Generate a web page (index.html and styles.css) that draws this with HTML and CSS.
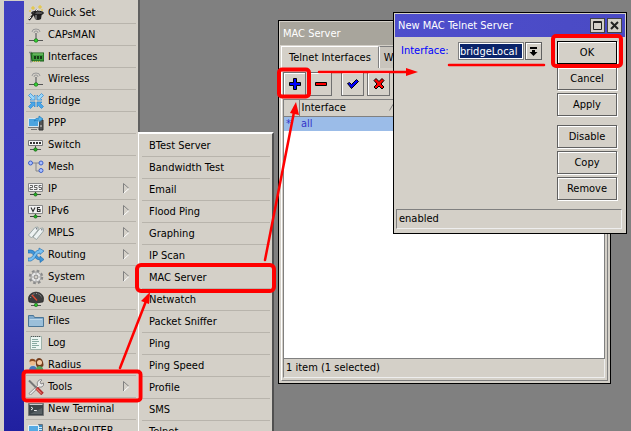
FILE: index.html
```html
<!DOCTYPE html>
<html lang="en">
<head>
<meta charset="utf-8">
<title>MAC Server</title>
<link rel="stylesheet" href="styles.css">
</head>
<body>
<div class="desktop">
  <div class="rail"></div>
  <nav class="menu main-menu">
    <a class="item" href="#"><svg class="icon" viewBox="0 0 16 16"><path d="M5 8h9l-1 6q-3 2-6 0z" fill="#222"/><ellipse cx="9.500" cy="8" rx="6" ry="1.800" fill="#555" stroke="#111"/><path d="M8 10v4" stroke="#aaa"/><path d="M1 15L9 5" stroke="#222" stroke-width="2"/><path d="M1 14l2-2M8 6l2-2" stroke="#eee"/><path d="M5 1v4M3 3h4M12 0v4M10 2h4M2 5v2M14 4v2" stroke="#e8c62c"/></svg>Quick Set</a>
    <a class="item" href="#"><svg class="icon" viewBox="0 0 16 16"><path d="M4 5q0-3 4-3t4 3M6 6q0-2 2-2t2 2" fill="none" stroke="#999"/><path d="M8 6v7" stroke="#777" stroke-width="1.500"/><path d="M1 13.500h14" stroke="#555"/><circle cx="8" cy="13.500" r="1.800" fill="#35d435" stroke="#137013" stroke-width=".7"/></svg>CAPsMAN</a>
    <a class="item" href="#"><svg class="icon" viewBox="0 0 16 16"><path d="M1 3.500h2v10" fill="none" stroke="#888" stroke-width="1.500"/><path d="M3 4h13v8H4z" fill="#3c9a3c" stroke="#175c17"/><path d="M5 5h10" stroke="#88cf78"/><path d="M6 7h2v3H6zM9 7h2v3H9zM12 7h2v3h-2z" fill="#173c17"/><path d="M5 12.500h8" stroke="#d7ca58" stroke-dasharray="1 1"/></svg>Interfaces</a>
    <a class="item" href="#"><svg class="icon" viewBox="0 0 16 16"><path d="M4 5q0-3 4-3t4 3M6 6q0-2 2-2t2 2" fill="none" stroke="#999"/><path d="M8 6v7" stroke="#777" stroke-width="1.500"/><path d="M1 13.500h14" stroke="#555"/><circle cx="8" cy="13.500" r="1.800" fill="#35d435" stroke="#137013" stroke-width=".7"/></svg>Wireless</a>
    <a class="item" href="#"><svg class="icon" viewBox="0 0 16 16"><g stroke="#2f86cf" stroke-width=".7"><path d="M7 7H2l1.500-1.500L.5 2.500l2-2 3 3L7 2z" fill="#9ad7fb"/><path d="M9 7h5l-1.500-1.500 3-3-2-2-3 3L9 2z" fill="#9ad7fb"/><path d="M7 9H2l1.500 1.500-3 3 2 2 3-3L7 14z" fill="#4ba6e8"/><path d="M9 9h5l-1.500 1.500 3 3-2 2-3-3L9 14z" fill="#4ba6e8"/></g></svg>Bridge</a>
    <a class="item" href="#"><svg class="icon" viewBox="0 0 16 16"><path d="M11 5h4v10h-4z" fill="#555" stroke="#333"/><path d="M12 11h2" stroke="#ddd"/><path d="M.5 3.500h10v8H.5z" fill="#4ca4df" stroke="#d8e5ee"/><path d="M0 12.500h11M3 14.500h6" stroke="#777"/><path d="M6 6q1-3 5-3V1l4 3-4 3V5q-3 0-5 1z" fill="#58b5ed" stroke="#1d79b7" stroke-width=".7"/></svg>PPP</a>
    <a class="item" href="#"><svg class="icon" viewBox="0 0 16 16"><path d="M.5 3.500h14v5H.5z" fill="#f5f5f5" stroke="#777"/><path d="M2 6h12" stroke="#333" stroke-width="2" stroke-dasharray="2 1"/><path d="M7.500 9v4M2 12.500h11" stroke="#555"/><circle cx="7.500" cy="12.500" r="1.700" fill="#25b525" stroke="#145f14" stroke-width=".7"/></svg>Switch</a>
    <a class="item" href="#"><svg class="icon" viewBox="0 0 16 16"><path d="M3 4h10M8 4v8h5" fill="none" stroke="#888"/><g fill="#a9c0ff" stroke="#3d5fc8"><circle cx="2.500" cy="4" r="2"/><circle cx="13" cy="4" r="2"/><circle cx="13" cy="11.500" r="2"/></g></svg>Mesh</a>
    <a class="item sub" href="#"><svg class="icon" viewBox="0 0 16 16"><path d="M.5 2.500h14v8H.5z" fill="#f3f3f3" stroke="#888"/><path d="M2 4.500h2.500v2H2v2h3M9.500 4.500H6.500v2h2.500v2H6M13.500 4.500H11v2h2.500v2H11" fill="none" stroke="#555" stroke-width=".9"/><path d="M7.500 11v3M2 13.500h11" stroke="#444"/><circle cx="7.500" cy="13.500" r="1.600" fill="#23b523" stroke="#145f14" stroke-width=".7"/></svg>IP<svg class="caret" viewBox="0 0 7 11"><path d="M.5 10.500V.5L6 5.500"/><path class="lit" d="M.5 10.500L6 5.500"/></svg></a>
    <a class="item sub" href="#"><svg class="icon" viewBox="0 0 16 16"><path d="M.5 2.500h14v8H.5z" fill="#f3f3f3" stroke="#888"/><path d="M3 4.500l2 4 2-4M12 4.500H9.500v4H12v-2H9.500" fill="none" stroke="#333" stroke-width="1.200"/><path d="M7.500 11v3M2 13.500h11" stroke="#444"/><circle cx="7.500" cy="13.500" r="1.600" fill="#23b523" stroke="#145f14" stroke-width=".7"/></svg>IPv6<svg class="caret" viewBox="0 0 7 11"><path d="M.5 10.500V.5L6 5.500"/><path class="lit" d="M.5 10.500L6 5.500"/></svg></a>
    <a class="item sub" href="#"><svg class="icon" viewBox="0 0 16 16"><g fill="#edf2f2" stroke="#8b9999" stroke-width=".8"><path d="M.5 10L7 2.500l3-.5v3L3.500 13z"/><path d="M5 12l7-8.500 3-.5.500 3L8.500 14.500z"/></g><circle cx="8.500" cy="3.700" r=".7" fill="#667"/><circle cx="13.800" cy="4.700" r=".7" fill="#667"/></svg>MPLS<svg class="caret" viewBox="0 0 7 11"><path d="M.5 10.500V.5L6 5.500"/><path class="lit" d="M.5 10.500L6 5.500"/></svg></a>
    <a class="item sub" href="#"><svg class="icon" viewBox="0 0 16 16"><path d="M0 3h3q3 0 5 4t4 4v-2l4 3.500-4 3V13q-4 0-6-4T2 6H0z" fill="#3e94d8" stroke="#1c6aad" stroke-width=".6"/><path d="M0 14v-3h2q2 0 4-4t5-4V1l5 3-4 3.500V6Q9 6 8 9t-5 5z" fill="#76bff2" stroke="#1c6aad" stroke-width=".6"/></svg>Routing<svg class="caret" viewBox="0 0 7 11"><path d="M.5 10.500V.5L6 5.500"/><path class="lit" d="M.5 10.500L6 5.500"/></svg></a>
    <a class="item sub" href="#"><svg class="icon" viewBox="0 0 16 16"><circle cx="8" cy="8" r="6" fill="none" stroke="#8b8b8b" stroke-width="2.500" stroke-dasharray="2.600 2.100"/><circle cx="8" cy="8" r="5" fill="#e6e6e6" stroke="#999"/><circle cx="8" cy="8" r="2" fill="#d4d0c8" stroke="#888"/><path d="M8 3v2M8 11v2M3 8h2M11 8h2" stroke="#aaa"/></svg>System<svg class="caret" viewBox="0 0 7 11"><path d="M.5 10.500V.5L6 5.500"/><path class="lit" d="M.5 10.500L6 5.500"/></svg></a>
    <a class="item" href="#"><svg class="icon" viewBox="0 0 16 16"><path d="M1 11Q-1 5 4 2q4-2 8 0 5 3 3 9-7 2-14 0z" fill="#3d3d3d" stroke="#222" stroke-width=".6"/><path d="M2.500 7q1-4 5.500-4.500Q13 3 13.500 7" fill="none" stroke="#bbb" stroke-dasharray="1 1.500"/><path d="M9 9.500L4 4" stroke="#e34a32" stroke-width="1.300"/><path d="M8 11v3M3 14.500h10" stroke="#555"/><circle cx="8" cy="14" r="1.700" fill="#2cc42c" stroke="#145f14" stroke-width=".5"/></svg>Queues</a>
    <a class="item" href="#"><svg class="icon" viewBox="0 0 16 16"><path d="M.5 13.500v-11h5l1 2h9v9z" fill="#7fa9cb" stroke="#4b7697"/><path d="M1.500 6.500h13" stroke="#bdd7e9"/><path d="M1 7h14v6H1z" fill="#9bbfd9"/></svg>Files</a>
    <a class="item" href="#"><svg class="icon" viewBox="0 0 16 16"><path d="M2.500 1.500h11v13h-11z" fill="#ecf6f2" stroke="#9fb2aa"/><path d="M3 1.500h10" stroke="#555" stroke-dasharray="1 1"/><path d="M4 4.500h6M4 6.500h7M4 8.500h5M4 10.500h7M4 12.500h4" stroke="#88aaa1"/></svg>Log</a>
    <a class="item" href="#"><svg class="icon" viewBox="0 0 16 16"><path d="M1 14q0-5 4-5t4 5z" fill="#4777b8"/><circle cx="4.500" cy="5.500" r="3" fill="#eebb8c"/><path d="M1.500 5q0-4 4-3 3 1 2 3-3-2-6 0z" fill="#8b4b21"/><path d="M8 8q-1-7 3-7t4.500 7q0 2-2 2H9z" fill="#713a19"/><circle cx="11.500" cy="5.500" r="2.500" fill="#f5cba5"/><path d="M7.500 15q0-6 4-6t4 6z" fill="#51a35b"/></svg>Radius</a>
    <a class="item sub" href="#"><svg class="icon" viewBox="0 0 16 16"><path d="M1 14.500L9.500 6.500q-1-3 1-5 2-1.500 3.500-.5l-2 2 1 2 2.500-1q.5 2.500-1 3.500t-3.500.5l-8.500 8z" fill="#ececec" stroke="#777" stroke-width=".8"/><path d="M1 1.500l7.500 7.500" stroke="#777" stroke-width="2"/><path d="M8.500 9l6 6" stroke="#b02a2a" stroke-width="3.500"/><path d="M8.500 9.500l5 5" stroke="#e67368" stroke-width="1.200"/></svg>Tools<svg class="caret" viewBox="0 0 7 11"><path d="M.5 10.500V.5L6 5.500"/><path class="lit" d="M.5 10.500L6 5.500"/></svg></a>
    <a class="item" href="#"><svg class="icon" viewBox="0 0 16 16"><path d="M.5 2.500h15v12H.5z" fill="#3d4548" stroke="#777"/><path d="M1.500 3.500h13" stroke="#ccc"/><path d="M3 6l2 1.500L3 9M6 9.500h3" fill="none" stroke="#eee"/><path d="M2 13l12-6v6z" fill="#596164"/></svg>New Terminal</a>
    <a class="item" href="#"><svg class="icon" viewBox="0 0 16 16"><path d="M10.500 1.500h4v13h-4z" fill="#3d89be" stroke="#64717a"/><path d="M11 4.500h3M11 6.500h3" stroke="#c9e8f9"/><path d="M.5 2.500h10v8H.5z" fill="#55aae3" stroke="#e7f1f7"/><path d="M2 13.500h7" stroke="#666"/></svg>MetaROUTER</a>
  </nav>

  <nav class="menu tools-menu">
    <a class="item" href="#">BTest Server</a>
    <a class="item" href="#">Bandwidth Test</a>
    <a class="item" href="#">Email</a>
    <a class="item" href="#">Flood Ping</a>
    <a class="item" href="#">Graphing</a>
    <a class="item" href="#">IP Scan</a>
    <a class="item" href="#">MAC Server</a>
    <a class="item" href="#">Netwatch</a>
    <a class="item" href="#">Packet Sniffer</a>
    <a class="item" href="#">Ping</a>
    <a class="item" href="#">Ping Speed</a>
    <a class="item" href="#">Profile</a>
    <a class="item" href="#">SMS</a>
    <a class="item" href="#">Telnet</a>
  </nav>

  <section class="window server">
    <header class="title">MAC Server</header>
    <div class="tabs"><button class="tab active">Telnet Interfaces</button><button class="tab">WinBox Interfaces</button></div>
    <div class="pane">
      <div class="toolbar">
        <button class="tool" aria-label="Add"><svg viewBox="0 0 14 14"><path d="M5.500 1.500h3v4h4v3h-4v4h-3v-4h-4v-3h4z" fill="#00f" stroke="#000"/></svg></button>
        <button class="tool" aria-label="Remove"><svg viewBox="0 0 14 14"><path d="M1.500 5.500h11v3h-11z" fill="#f00" stroke="#000"/></svg></button>
        <button class="tool gap" aria-label="Enable"><svg viewBox="0 0 14 14"><path d="M1.500 6.500l2-1 2 2 5-5 2 2-7 7z" fill="#00f" stroke="#000"/></svg></button>
        <button class="tool" aria-label="Disable"><svg viewBox="0 0 14 14"><path d="M2 3.500l2-2 3 3 3-3 2 2-3 3.500 3 3-2 2-3-3-3 3-2-2 3-3z" fill="#f00" stroke="#000"/></svg></button>
      </div>
      <div class="list">
        <table>
          <thead><tr><th class="flag"></th><th>Interface<svg class="sort" viewBox="0 0 8 7"><path d="M.5 6.500L4 .5l3.500 6" fill="none" stroke="#808080"/></svg></th><th class="rest"></th></tr></thead>
          <tbody><tr><td>*</td><td>all</td><td></td></tr></tbody>
        </table>
      </div>
      <footer class="status">1 item (1 selected)</footer>
    </div>
  </section>

  <section class="window dialog">
    <header class="title">New MAC Telnet Server
      <span class="controls"><button aria-label="Maximize"><svg viewBox="0 0 11 11"><path d="M1.500 1.500h8v8h-8zM1 2.500h9" fill="none" stroke="#222"/></svg></button><button aria-label="Close"><svg viewBox="0 0 11 11"><path d="M2 2l7 7M9 2l-7 7" stroke="#222" stroke-width="2"/></svg></button></span>
    </header>
    <div class="form">
      <div class="field">
        <label for="iface">Interface:</label>
        <input id="iface" type="text" value="bridgeLocal">
        <button class="drop" aria-label="Choose interface"><svg viewBox="0 0 9 9"><path d="M1 0h7v2H1zM3 3h3v2h2.500l-4 4-4-4H3z"/></svg></button>
      </div>
      <div class="actions">
        <button class="default">OK</button>
        <button>Cancel</button>
        <button>Apply</button>
        <button class="apart">Disable</button>
        <button>Copy</button>
        <button>Remove</button>
      </div>
    </div>
    <footer class="status">enabled</footer>
  </section>

  <svg class="marks" viewBox="0 0 631 431" width="631" height="431">
    <g fill="none" stroke="#f00" stroke-width="4">
      <rect x="23.500" y="371.500" width="117" height="29" rx="3"/>
      <rect x="137" y="265" width="137" height="26" rx="4"/>
      <rect x="279" y="69.500" width="30" height="27" rx="3"/>
      <rect x="553" y="36" width="68" height="30" rx="3"/>
    </g>
    <g fill="none" stroke="#f00" stroke-width="2.500" stroke-linecap="round">
      <path d="M120 368L148 296M265 260L295 107M319 72H410M449 65H544"/>
    </g>
    <path fill="#f00" d="M150 292l-9 9 8 3zM296 102l-6 11 9 2zM418 72l-12-4v8z"/>
  </svg>
</div>
</body>
</html>
```
FILE: styles.css
```css
* { box-sizing: border-box; }

body {
  margin: 0;
  font: 11px/14px "DejaVu Sans Condensed", "DejaVu Sans", sans-serif;
  color: #000;
}

button, input { font: inherit; color: inherit; }
svg { display: block; }

.desktop {
  position: relative;
  display: flex;
  height: 100vh;
  overflow: hidden;
  background: #808080;
}

.rail {
  flex: 0 0 24px;
  border-left: 4px solid #d4d0c8;
  background: linear-gradient(#4040c0, #3838bc 60%, #2020a0);
  box-shadow: inset 0 1px #d4d0c8;
}

/* menus */
.menu { background: #d4d0c8; }

.main-menu {
  flex: 0 0 116px;
  padding: 2px 2px 0;
  border-right: 2px solid #606060;
}

.item {
  display: flex;
  align-items: center;
  gap: 4px;
  height: 22px;
  padding: 1px 2px 0;
  border-bottom: 1px solid #b8b4ac;
  color: inherit;
  text-decoration: none;
  white-space: nowrap;
}

.icon { flex: none; width: 16px; height: 16px; }

.caret {
  flex: none;
  width: 7px;
  height: 11px;
  margin: 0 4px 2px auto;
  fill: none;
  stroke: #808080;
}
.caret .lit { stroke: #fff; }

.tools-menu {
  position: absolute;
  top: 132px;
  left: 138px;
  width: 136px;
  padding: 1px 2px 0 3px;
  border: solid;
  border-width: 2px 2px 0 1px;
  border-color: #fff #505050 #fff #fff;
}
.tools-menu .item { padding: 1px 7px 0; }

/* windows */
.window {
  position: absolute;
  display: flex;
  flex-direction: column;
  padding: 1px;
  border: 1px solid #000;
  background: #d4d0c8;
}

.title {
  display: flex;
  align-items: center;
  justify-content: space-between;
  height: 23px;
  padding: 0 3px;
  color: #fff;
  background: #a8a59c;
}

.server { top: 20px; left: 278px; width: 333px; height: 364px; }

.tabs { display: flex; height: 23px; padding: 1px 1px 0; overflow: hidden; }

.tab {
  flex: none;
  padding: 0 4px;
  border: 1px solid #808080;
  border-left-color: #fff;
  border-bottom: 0;
  background: #c8c4bc;
}
.tab.active { padding: 0 7px; border-top-color: #fff; background: #d4d0c8; }

.pane {
  flex: 1;
  display: flex;
  flex-direction: column;
  margin: 0 1px 1px;
  padding: 4px 2px 2px 1px;
  border: solid;
  border-width: 0 1px 1px;
  border-color: #fff #808080 #808080 #fff;
}

.toolbar { display: flex; gap: 3px; padding-bottom: 3px; }

.tool {
  display: grid;
  place-items: center;
  width: 23px;
  height: 24px;
  padding: 0;
  border: 1px solid #707070;
  background: #d4d0c8;
  box-shadow: inset 1px 1px #fff;
}
.tool.gap { margin-left: 6px; }
.tool svg { width: 14px; height: 14px; }

.list {
  flex: 1;
  border: 1px solid #808080;
  background: #fff;
}

table { width: 100%; border-collapse: collapse; table-layout: fixed; }
th, td { height: 15px; padding: 0 2px; text-align: left; font-weight: normal; }
th {
  position: relative;
  height: 16px;
  border-right: 1px solid #808080;
  border-bottom: 1px solid #808080;
  background: #d4d0c8;
}
th:nth-child(2) { width: 100px; }
th.flag { width: 15px; }
td { color: #3434c8; background: #9bbce8; }
.sort { position: absolute; top: 4px; right: 2px; width: 8px; height: 7px; }

.status { padding: 2px; border: 1px solid #808080; border-right-color: #eee; border-bottom-color: #eee; }
.server .status { border-top: 0; }

.dialog { top: 12px; left: 393px; width: 234px; height: 222px; }
.dialog .title { background: linear-gradient(90deg, #4e4ecc, #4a4ac4); }

.controls { display: flex; gap: 2px; }
.controls button {
  display: grid;
  place-items: center;
  width: 15px;
  height: 15px;
  padding: 0;
  border: 1px solid #444;
  background: #d4d0c8;
}
.controls svg { width: 11px; height: 11px; }

.form {
  flex: 1;
  display: flex;
  justify-content: space-between;
  align-items: flex-start;
  padding: 4px 8px 4px 6px;
}

.field { display: flex; align-items: center; margin-top: 1px; }
.field label { width: 57px; color: #00f; }

.field input {
  width: 66px;
  height: 18px;
  padding: 0 1px;
  border: 1px solid #808080;
  box-shadow: inset 0 0 0 1px #fff;
  color: #fff;
  background: #0a246a;
}

.drop {
  display: grid;
  place-items: center;
  width: 17px;
  height: 18px;
  margin-left: 1px;
  padding: 0;
  border: 1px solid #606060;
  background: #d4d0c8;
  box-shadow: inset 1px 1px #fff;
}
.drop svg { width: 9px; height: 9px; }

.actions { display: flex; flex-direction: column; gap: 3px; }
.actions button {
  width: 60px;
  height: 23px;
  padding: 0;
  border: 1px solid #606060;
  background: #d4d0c8;
  box-shadow: inset 1px 1px #fff, 1px 1px #fff;
}
.actions .default { border-color: #000; }
.actions .apart { margin-top: 6px; }

.dialog .status { margin: 0 3px 3px 1px; }

/* highlight boxes and arrows over the windows */
.marks { position: absolute; top: 0; left: 0; pointer-events: none; }
```
